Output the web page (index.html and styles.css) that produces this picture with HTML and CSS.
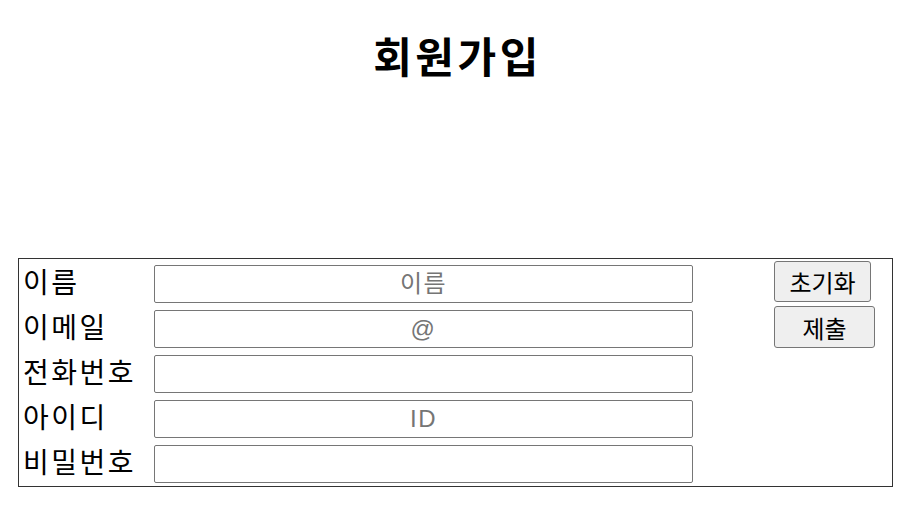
FILE: index.html
```html
<!DOCTYPE html>
<html lang="ko">
<head>
    <meta charset="UTF-8">
    <meta name="viewport" content="width=device-width, initial-scale=1.0">
    <title>회원가입</title>
    <link rel="stylesheet" href="styles.css">
</head>
<body>
    <h1 class="page-title">회원가입</h1>
    <form class="signup-form" id="signup-form">
        <div class="fields">
            <label for="name">이름</label>
            <input type="text" id="name" name="name" placeholder="이름">

            <label for="email">이메일</label>
            <input type="email" id="email" name="email" placeholder="@">

            <label for="phone">전화번호</label>
            <input type="tel" id="phone" name="phone">

            <label for="user-id">아이디</label>
            <input type="text" id="user-id" name="user-id" placeholder="ID">

            <label for="password">비밀번호</label>
            <input type="password" id="password" name="password">
        </div>
        <div class="actions">
            <button type="reset" class="btn btn-reset">초기화</button>
            <button type="submit" class="btn btn-submit">제출</button>
        </div>
    </form>
</body>
</html>
```

FILE: styles.css
```css
body {
    margin: 8px;
    font-family: 'Liberation Sans', 'Noto Sans CJK KR', sans-serif;
    color: #000;
    background: #fff;
}

.page-title {
    margin: 28px 0 0;
    padding-left: 4px;
    font-size: 42px;
    line-height: 46px;
    font-weight: bold;
    letter-spacing: 3.5px;
    text-align: center;
}

.signup-form {
    display: flex;
    align-items: flex-start;
    margin: 176px 10px 0;
    padding: 2px 0 0;
    border: 1px solid #333;
}

.fields {
    display: grid;
    grid-template-columns: 135px 539px;
    grid-auto-rows: 45px;
    align-items: center;
}

.fields label {
    padding-left: 4px;
    font-size: 28px;
    line-height: 32px;
    letter-spacing: 2.5px;
}

.fields input {
    box-sizing: border-box;
    width: 539px;
    height: 38px;
    padding: 0 4px;
    border: 1px solid #767676;
    border-radius: 2px;
    font-family: inherit;
    font-size: 24px;
    letter-spacing: 1.5px;
    text-align: center;
}

.fields input::placeholder {
    color: #757575;
}

.actions {
    display: flex;
    flex-direction: column;
    align-items: flex-start;
    gap: 4px;
    margin-left: 81px;
}

.btn {
    box-sizing: border-box;
    height: 41px;
    padding: 0;
    background: #efefef;
    border: 1px solid #767676;
    border-radius: 3px;
    font-family: inherit;
    font-size: 24px;
    color: #000;
    cursor: pointer;
}

.btn-reset {
    width: 97px;
}

.btn-submit {
    width: 101px;
    height: 42px;
}
```
